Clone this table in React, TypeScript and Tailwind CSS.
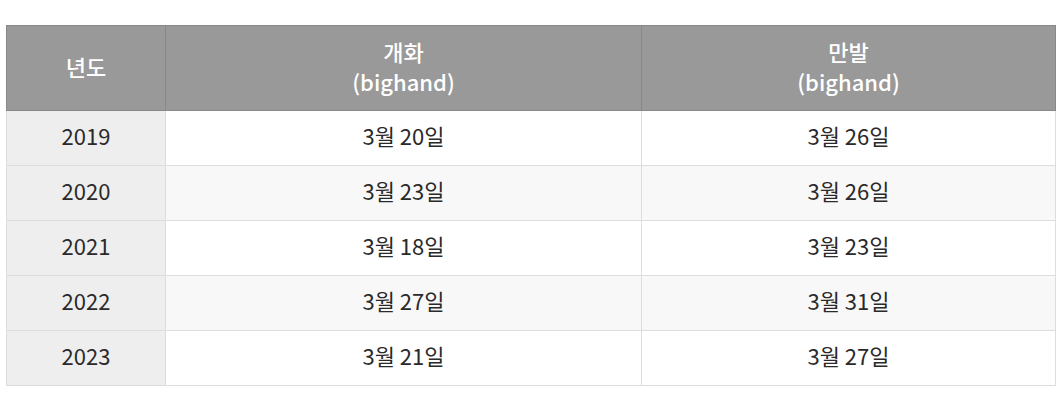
const rows = [
  { year: '2019', open: '3월 20일', full: '3월 26일' },
  { year: '2020', open: '3월 23일', full: '3월 26일' },
  { year: '2021', open: '3월 18일', full: '3월 23일' },
  { year: '2022', open: '3월 27일', full: '3월 31일' },
  { year: '2023', open: '3월 21일', full: '3월 27일' },
]

export default function App() {
  return (
    <div
      className="bg-white w-[1062px] h-[415px] pt-[25px] pl-[6px]"
      style={{ fontFamily: '"Noto Sans CJK KR", "Noto Sans", sans-serif' }}
    >
      <table className="w-[1050px] table-fixed border-collapse text-center text-[22px] text-[#2a2a2a]">
        <colgroup>
          <col className="w-[159px]" />
          <col className="w-[476px]" />
          <col />
        </colgroup>
        <thead>
          <tr className="bg-[#999] text-white h-[85px] leading-[30px]">
            <th className="border border-[#888] font-medium pb-[5px]">년도</th>
            <th className="border border-[#888] font-medium pb-[5px]">
              개화
              <br />
              (bighand)
            </th>
            <th className="border border-[#888] font-medium pb-[5px]">
              만발
              <br />
              (bighand)
            </th>
          </tr>
        </thead>
        <tbody>
          {rows.map((r, i) => (
            <tr key={r.year} className={`h-[55px] ${i % 2 === 1 ? 'bg-[#f8f8f8]' : 'bg-white'}`}>
              <td className="border border-[#ddd] bg-[#eee] pb-[6px]">{r.year}</td>
              <td className="border border-[#ddd] pb-[6px]">{r.open}</td>
              <td className="border border-[#ddd] pb-[6px]">{r.full}</td>
            </tr>
          ))}
        </tbody>
      </table>
    </div>
  )
}
